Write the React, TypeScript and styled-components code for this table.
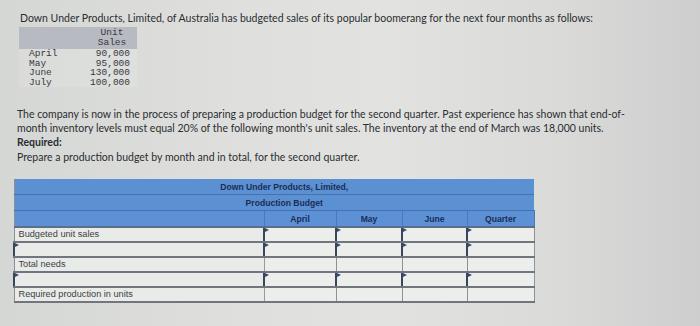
import React from "react"
import styled, { createGlobalStyle } from "styled-components"

const GlobalStyle = createGlobalStyle`
  html, body {
    margin: 0;
    padding: 0;
  }
  body {
    width: 700px;
    height: 326px;
    overflow: hidden;
    background: linear-gradient(90deg, #d5d7d4 0%, #dfe0dd 35%, #e2e3e0 55%, #dadbd9 80%, #cdcecd 100%);
    font-family: Lato, "Open Sans", sans-serif;
    color: #2b2d31;
  }
`

const salesRows = [
  { month: "April", units: "90,000" },
  { month: "May", units: "95,000" },
  { month: "June", units: "130,000" },
  { month: "July", units: "100,000" },
]

const columns = ["April", "May", "June", "Quarter"]

type BudgetRow = { label: string; input: boolean }

const budgetRows: BudgetRow[] = [
  { label: "Budgeted unit sales", input: false },
  { label: "", input: true },
  { label: "Total needs", input: false },
  { label: "", input: true },
  { label: "Required production in units", input: false },
]

export default function App() {
  return (
    <>
      <GlobalStyle />
      <Page>
        <Intro>
          Down Under Products, Limited, of Australia has budgeted sales of its popular boomerang for the
          next four months as follows:
        </Intro>

        <SalesTable>
          <SalesHead>
            <span />
            <SalesHeadCell>
              Unit
              <br />
              Sales
            </SalesHeadCell>
          </SalesHead>
          {salesRows.map((row) => (
            <SalesRow key={row.month}>
              <span>{row.month}</span>
              <SalesValue>{row.units}</SalesValue>
            </SalesRow>
          ))}
        </SalesTable>

        <Paragraph>
          The company is now in the process of preparing a production budget for the second quarter. Past
          experience has shown that end-of-
          <br />
          month inventory levels must equal 20% of the following month's unit sales. The inventory at the end
          of March was 18,000 units.
        </Paragraph>

        <Required>Required:</Required>
        <Prompt>Prepare a production budget by month and in total, for the second quarter.</Prompt>

        <Budget>
          <colgroup>
            <col style={{ width: 250 }} />
            <col style={{ width: 72 }} />
            <col style={{ width: 66 }} />
            <col style={{ width: 65 }} />
            <col style={{ width: 67 }} />
          </colgroup>
          <thead>
            <tr>
              <TitleCell colSpan={5}>Down Under Products, Limited,</TitleCell>
            </tr>
            <tr>
              <TitleCell colSpan={5}>Production Budget</TitleCell>
            </tr>
            <tr>
              <ColHead />
              {columns.map((c) => (
                <ColHead key={c}>{c}</ColHead>
              ))}
            </tr>
          </thead>
          <tbody>
            {budgetRows.map((row, i) => (
              <tr key={i}>
                <LabelCell $input={row.input}>{row.label}</LabelCell>
                {columns.map((c) => (
                  <ValueCell key={c} $input={row.input || i === 0} />
                ))}
              </tr>
            ))}
          </tbody>
        </Budget>
      </Page>
    </>
  )
}

const Page = styled.div`
  padding: 11px 0 0 20px;
`

const Intro = styled.p`
  margin: 0;
  font-size: 10.5px;
  line-height: 14px;
  white-space: nowrap;
`

const SalesTable = styled.div`
  margin: 2px 0 0 -1px;
  width: 118px;
  font-family: "Liberation Mono", "DejaVu Sans Mono", monospace;
  font-size: 9.5px;
  color: #363940;
`

const SalesHead = styled.div`
  display: grid;
  grid-template-columns: 59px 42px;
  padding: 1px 7px 1px 10px;
  background: #b7bbc1;
  line-height: 10px;
`

const SalesHeadCell = styled.div`
  text-align: center;
  padding-left: 6px;
`

const SalesRow = styled.div`
  display: grid;
  grid-template-columns: 59px 42px;
  padding: 0 7px 0 10px;
  line-height: 9.5px;
  background: rgba(255, 255, 255, 0.12);
`

const SalesValue = styled.span`
  text-align: right;
`

const Paragraph = styled.p`
  margin: 20px 0 0 -3px;
  font-size: 10.5px;
  line-height: 14px;
  white-space: nowrap;
`

const Required = styled.div`
  margin: 0 0 0 -3px;
  font-size: 10.5px;
  line-height: 15px;
  font-weight: 700;
`

const Prompt = styled.div`
  margin: 0 0 0 -3px;
  font-size: 10.5px;
  line-height: 15px;
`

const Budget = styled.table`
  margin: 14px 0 0 -7px;
  width: 520px;
  table-layout: fixed;
  border-collapse: collapse;
  font-family: "Liberation Sans", Arial, sans-serif;
  border-left: 1px solid #8b9097;
  border-bottom: 2px solid #7b8088;
`

const TitleCell = styled.th`
  height: 15px;
  padding: 0 0 0 20px;
  background: #5b90d3;
  border-bottom: 1px solid #4673b0;
  color: #1c2d55;
  font-size: 8.6px;
  font-weight: 700;
  text-align: center;
`

const ColHead = styled.th`
  height: 15px;
  padding: 0;
  background: #5c92d5;
  border-left: 1px solid #4a7ab8;
  border-bottom: 2px solid #5d6f88;
  color: #1c2d55;
  font-size: 8.6px;
  font-weight: 700;
  text-align: center;

  &:first-child {
    border-left: none;
  }
  &:last-child {
    border-right: 1px solid #4a7ab8;
  }
`

const Marker = `
  &::before {
    content: "";
    position: absolute;
    left: 0;
    top: 0;
    border-top: 2px solid transparent;
    border-bottom: 2px solid transparent;
    border-left: 4px solid #2f4c7c;
  }
`

const LabelCell = styled.td<{ $input: boolean }>`
  position: relative;
  height: 13px;
  padding: 0 0 0 4px;
  background: #e9ebe9;
  border-bottom: 2px solid #71767e;
  border-left: ${(p) => (p.$input ? "2px solid #3a4656" : "none")};
  color: #3b3e44;
  font-size: 9.2px;
  line-height: 13px;
  white-space: nowrap;
  ${(p) => (p.$input ? Marker : "")}
`

const ValueCell = styled.td<{ $input: boolean }>`
  position: relative;
  height: 13px;
  padding: 0;
  background: #eceeec;
  border-bottom: 2px solid #71767e;
  border-left: ${(p) => (p.$input ? "2px solid #3a4656" : "1px solid #959aa0")};
  border-right: 1px solid #8d9298;
  ${(p) => (p.$input ? Marker : "")}
`
